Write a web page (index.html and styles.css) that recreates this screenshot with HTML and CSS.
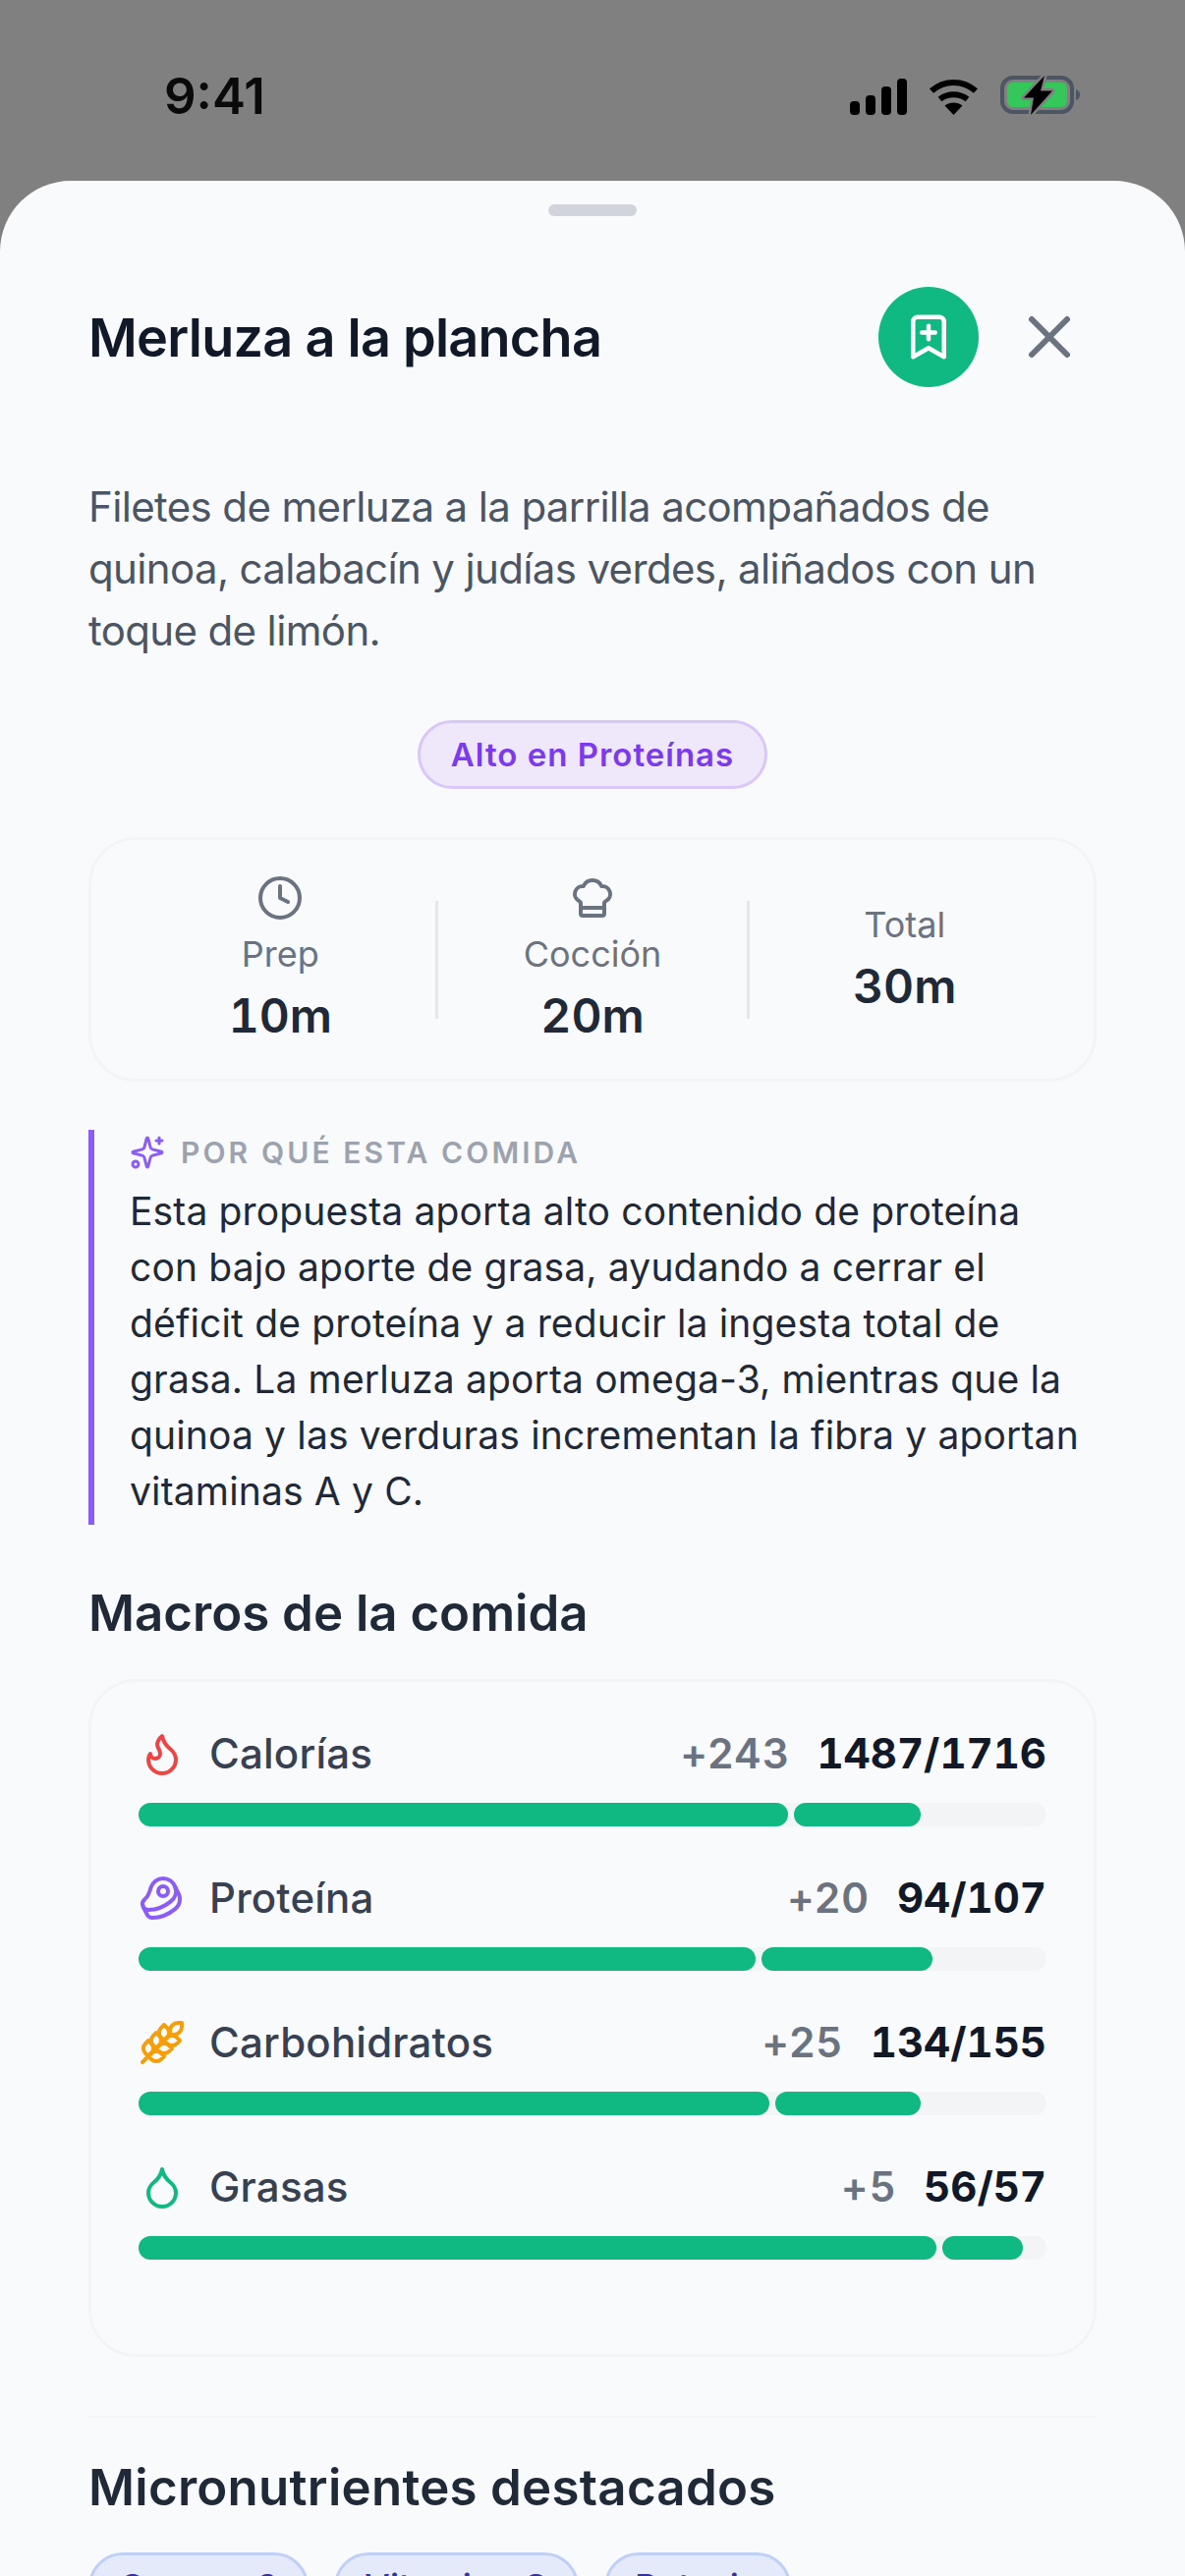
FILE: index.html
```html
<!DOCTYPE html>
<html lang="es">
<head>
    <meta charset="UTF-8">
    <meta name="viewport" content="width=device-width, initial-scale=1.0">
    <title>Merluza a la plancha</title>
    <link rel="stylesheet" href="styles.css">
</head>
<body>
    <div class="status-bar">
        <span class="clock">9:41</span>
        <div class="status-icons">
            <svg class="signal" width="58" height="37" viewBox="0 0 58 37" fill="#000">
                <rect x="0" y="23" width="10" height="14" rx="4"/>
                <rect x="16" y="17" width="10" height="20" rx="4"/>
                <rect x="32" y="8" width="10" height="29" rx="4"/>
                <rect x="48" y="0" width="10" height="37" rx="4"/>
            </svg>
            <svg class="wifi" width="51" height="37" viewBox="0 0 51 37" fill="none" stroke="#000" stroke-width="6">
                <path d="M3 12.5C16 1 35 1 48 12.5"/>
                <path d="M11.5 21C19.500 14.500 31.500 14.500 39.500 21"/>
                <path d="M25.500 37L16.500 27.500C21.500 23.500 29.500 23.500 34.500 27.500Z" fill="#000" stroke="none"/>
            </svg>
            <svg class="battery" width="82" height="42" viewBox="0 0 82 42" fill="none">
                <rect x="2" y="3" width="71" height="35" rx="11" stroke="#4b5563" stroke-width="4"/>
                <rect x="7" y="8" width="61" height="25" rx="6" fill="#34c759"/>
                <path d="M77 15c3 1 4 3 4 5.500s-1 4.500-4 5.500z" fill="#4b5563"/>
                <path d="M45 1L24 23.500H34L31 41L53 16.500H41Z" fill="#000" stroke="#7f807f" stroke-width="5" stroke-linejoin="round" paint-order="stroke"/>
            </svg>
        </div>
    </div>

    <div class="sheet">
        <div class="handle"></div>

        <div class="sheet-header">
            <h1>Merluza a la plancha</h1>
            <div class="save-btn">
                <svg width="54" height="54" viewBox="0 0 24 24" fill="none" stroke="#fff" stroke-width="2" stroke-linecap="round" stroke-linejoin="round">
                    <path d="m19 21-7-4-7 4V5a2 2 0 0 1 2-2h10a2 2 0 0 1 2 2v16z"/>
                    <line x1="12" x2="12" y1="7" y2="13"/>
                    <line x1="15" x2="9" y1="10" y2="10"/>
                </svg>
            </div>
            <svg class="close-icon" width="72" height="72" viewBox="0 0 24 24" fill="none" stroke="#6b7280" stroke-width="2" stroke-linecap="round" stroke-linejoin="round">
                <path d="M18 6 6 18"/>
                <path d="m6 6 12 12"/>
            </svg>
        </div>

        <p class="description">Filetes de merluza a la parrilla acompañados de quinoa, calabacín y judías verdes, aliñados con un toque de limón.</p>

        <div class="tag-row"><span class="tag">Alto en Proteínas</span></div>

        <div class="card time-card">
            <div class="time-col">
                <svg width="48" height="48" viewBox="0 0 24 24" fill="none" stroke="#6b7280" stroke-width="2" stroke-linecap="round" stroke-linejoin="round">
                    <circle cx="12" cy="12" r="10"/>
                    <polyline points="12 6 12 12 16 14"/>
                </svg>
                <span class="time-label">Prep</span>
                <span class="time-value">10m</span>
            </div>
            <div class="time-sep"></div>
            <div class="time-col">
                <svg width="48" height="48" viewBox="0 0 24 24" fill="none" stroke="#6b7280" stroke-width="2" stroke-linecap="round" stroke-linejoin="round">
                    <path d="M17 21a1 1 0 0 0 1-1v-5.350c0-.457.316-.844.727-1.041a4 4 0 0 0-2.134-7.589 5 5 0 0 0-9.186 0 4 4 0 0 0-2.134 7.588c.411.198.727.585.727 1.041V20a1 1 0 0 0 1 1Z"/>
                    <path d="M6 17h12"/>
                </svg>
                <span class="time-label">Cocción</span>
                <span class="time-value">20m</span>
            </div>
            <div class="time-sep"></div>
            <div class="time-col">
                <span class="time-label">Total</span>
                <span class="time-value">30m</span>
            </div>
        </div>

        <div class="why">
            <div class="why-title">
                <svg width="36" height="36" viewBox="0 0 24 24" fill="none" stroke="#8b5cf6" stroke-width="2" stroke-linecap="round" stroke-linejoin="round">
                    <path d="M9.937 15.500A2 2 0 0 0 8.500 14.063l-6.135-1.582a.5.5 0 0 1 0-.962L8.500 9.936A2 2 0 0 0 9.937 8.500l1.582-6.135a.5.5 0 0 1 .963 0L14.063 8.500A2 2 0 0 0 15.500 9.937l6.135 1.581a.5.5 0 0 1 0 .964L15.500 14.063a2 2 0 0 0-1.437 1.437l-1.582 6.135a.5.5 0 0 1-.963 0z"/>
                    <path d="M20 2v4"/>
                    <path d="M22 4h-4"/>
                    <circle cx="4" cy="20" r="2"/>
                </svg>
                <span>POR QUÉ ESTA COMIDA</span>
            </div>
            <p>Esta propuesta aporta alto contenido de proteína<br>con bajo aporte de grasa, ayudando a cerrar el<br>déficit de proteína y a reducir la ingesta total de<br>grasa. La merluza aporta omega-3, mientras que la<br>quinoa y las verduras incrementan la fibra y aportan<br>vitaminas A y C.</p>
        </div>

        <h2 class="macros-title">Macros de la comida</h2>

        <div class="card macros-card">
            <div class="macro">
                <div class="macro-head">
                    <svg width="48" height="48" viewBox="0 0 24 24" fill="none" stroke="#ef4444" stroke-width="2" stroke-linecap="round" stroke-linejoin="round">
                        <path d="M8.500 14.500A2.500 2.500 0 0 0 11 12c0-1.380-.5-2-1-3-1.072-2.143-.224-4.054 2-6 .5 2.500 2 4.900 4 6.500 2 1.600 3 3.500 3 5.500a7 7 0 1 1-14 0c0-1.153.433-2.294 1-3a2.500 2.500 0 0 0 2.500 2.500z"/>
                    </svg>
                    <span class="macro-name">Calorías</span>
                    <span class="macro-delta">+243</span>
                    <span class="macro-total">1487/1716</span>
                </div>
                <div class="bar">
                    <div class="seg" style="width: 71.54%"></div>
                    <div class="seg" style="width: 13.96%"></div>
                </div>
            </div>
            <div class="macro">
                <div class="macro-head">
                    <svg width="48" height="48" viewBox="0 0 24 24" fill="none" stroke="#8b5cf6" stroke-width="2" stroke-linecap="round" stroke-linejoin="round">
                        <circle cx="12.500" cy="8.500" r="2.500"/>
                        <path d="M12.500 2a6.500 6.500 0 0 0-6.220 4.600c-1.100 3.130-.78 3.900-3.180 6.080A3 3 0 0 0 5 18c4 0 8.400-1.800 11.400-4.300A6.500 6.500 0 0 0 12.500 2Z"/>
                        <path d="m18.500 6 2.190 4.500a6.480 6.480 0 0 1 .31 2 6.490 6.490 0 0 1-2.600 5.200C15.400 20.200 11 22 7 22a3 3 0 0 1-2.680-1.660L2.400 16.500"/>
                    </svg>
                    <span class="macro-name">Proteína</span>
                    <span class="macro-delta">+20</span>
                    <span class="macro-total">94/107</span>
                </div>
                <div class="bar">
                    <div class="seg" style="width: 67.97%"></div>
                    <div class="seg" style="width: 18.83%"></div>
                </div>
            </div>
            <div class="macro">
                <div class="macro-head">
                    <svg width="48" height="48" viewBox="0 0 24 24" fill="none" stroke="#f59e0b" stroke-width="2" stroke-linecap="round" stroke-linejoin="round">
                        <path d="M2 22 16 8"/>
                        <path d="M3.470 12.530 5 11l1.530 1.530a3.500 3.500 0 0 1 0 4.940L5 19l-1.530-1.530a3.500 3.500 0 0 1 0-4.940Z"/>
                        <path d="M7.470 8.530 9 7l1.530 1.530a3.500 3.500 0 0 1 0 4.940L9 15l-1.530-1.530a3.500 3.500 0 0 1 0-4.940Z"/>
                        <path d="M11.470 4.530 13 3l1.530 1.530a3.500 3.500 0 0 1 0 4.940L13 11l-1.530-1.530a3.500 3.500 0 0 1 0-4.940Z"/>
                        <path d="M20 2h2v2a4 4 0 0 1-4 4h-2V6a4 4 0 0 1 4-4Z"/>
                        <path d="M11.470 17.470 13 19l-1.530 1.530a3.500 3.500 0 0 1-4.940 0L5 19l1.530-1.530a3.500 3.500 0 0 1 4.940 0Z"/>
                        <path d="M15.470 13.470 17 15l-1.530 1.530a3.500 3.500 0 0 1-4.940 0L9 15l1.530-1.530a3.500 3.500 0 0 1 4.940 0Z"/>
                        <path d="M19.470 9.470 21 11l-1.530 1.530a3.500 3.500 0 0 1-4.940 0L13 11l1.530-1.530a3.500 3.500 0 0 1 4.940 0Z"/>
                    </svg>
                    <span class="macro-name">Carbohidratos</span>
                    <span class="macro-delta">+25</span>
                    <span class="macro-total">134/155</span>
                </div>
                <div class="bar">
                    <div class="seg" style="width: 69.48%"></div>
                    <div class="seg" style="width: 16.02%"></div>
                </div>
            </div>
            <div class="macro">
                <div class="macro-head">
                    <svg width="48" height="48" viewBox="0 0 24 24" fill="none" stroke="#10b981" stroke-width="2" stroke-linecap="round" stroke-linejoin="round">
                        <path d="M12 22a7 7 0 0 0 7-7c0-2-1-3.900-3-5.500s-3.500-4-4-6.500c-.5 2.500-2 4.900-4 6.500C6 11.100 5 13 5 15a7 7 0 0 0 7 7z"/>
                    </svg>
                    <span class="macro-name">Grasas</span>
                    <span class="macro-delta">+5</span>
                    <span class="macro-total">56/57</span>
                </div>
                <div class="bar">
                    <div class="seg" style="width: 87.88%"></div>
                    <div class="seg" style="width: 8.87%"></div>
                </div>
            </div>
        </div>

        <hr class="divider">

        <h2 class="micros-title">Micronutrientes destacados</h2>

        <div class="chips">
            <span class="chip">Omega-3</span>
            <span class="chip">Vitamina C</span>
            <span class="chip">Potasio</span>
        </div>
    </div>
</body>
</html>
```

FILE: styles.css
```css
* {
    box-sizing: border-box;
}

html,
body {
    height: 2622px;
    overflow: hidden;
}

body {
    margin: 0;
    background-color: #7f807f;
    font-family: Inter, "Noto Sans", sans-serif;
}

/* Status bar */
.status-bar {
    height: 184px;
    display: flex;
    justify-content: space-between;
    align-items: flex-start;
    padding: 69px 106px 0 167px;
}

.clock {
    font-size: 51px;
    line-height: 58px;
    font-weight: 600;
    color: #0a0a0a;
}

.status-icons {
    display: flex;
    align-items: center;
    gap: 22px;
    margin-top: 9px;
}

.signal,
.wifi {
    display: block;
}

.battery {
    display: block;
    margin-top: -2px;
}

/* Sheet */
.sheet {
    height: 2438px;
    padding: 24px 90px 0;
    background-color: #f9fafc;
    border-radius: 72px 72px 0 0;
}

.handle {
    width: 90px;
    height: 12px;
    margin: 0 auto;
    border-radius: 6px;
    background-color: #d1d5db;
}

.sheet-header {
    display: flex;
    align-items: center;
    margin-top: 72px;
}

h1 {
    flex: 1;
    margin: 0;
    font-size: 54px;
    font-weight: 600;
    letter-spacing: -0.75px;
    color: #111827;
}

.save-btn {
    width: 102px;
    height: 102px;
    border-radius: 50%;
    background-color: #10b981;
    display: flex;
    justify-content: center;
    align-items: center;
}

.close-icon {
    margin-left: 36px;
    margin-right: 12px;
}

.description {
    margin: 90px 0 0;
    font-size: 42px;
    line-height: 63px;
    letter-spacing: -0.64px;
    color: #4b5563;
}

.tag-row {
    display: flex;
    justify-content: center;
    margin-top: 60px;
}

.tag {
    height: 70px;
    padding: 0 31px;
    display: flex;
    align-items: center;
    font-size: 33px;
    font-weight: 600;
    letter-spacing: 1px;
    color: #7c3aed;
    background-color: #efe8fb;
    border: 3px solid #d8c7f8;
    border-radius: 35px;
}

.card {
    border: 3px solid #f3f4f6;
    border-radius: 48px;
}

/* Prep / cook / total */
.time-card {
    height: 249px;
    margin-top: 49px;
    padding: 0 35px;
    display: flex;
    align-items: center;
}

.time-col {
    flex: 1;
    display: flex;
    flex-direction: column;
    align-items: center;
}

.time-col:last-child {
    padding-bottom: 6px;
}

.time-col svg {
    margin-bottom: 6px;
}

.time-label {
    font-size: 36px;
    line-height: 54px;
    color: #6b7280;
}

.time-value {
    margin-top: 6px;
    font-size: 48px;
    line-height: 60px;
    font-weight: 600;
    font-variant-numeric: tabular-nums;
    color: #1f2937;
}

.time-sep {
    width: 3px;
    height: 120px;
    background-color: #e5e7eb;
}

/* Why this meal */
.why {
    margin-top: 49px;
    padding: 2px 0 6px 36px;
    border-left: 6px solid #8b5cf6;
}

.why-title {
    display: flex;
    align-items: center;
    gap: 16px;
    height: 42px;
    font-size: 30px;
    font-weight: 600;
    letter-spacing: 3.100px;
    color: #9ca3af;
}

.why p {
    margin: 10px 0 0;
    font-size: 39px;
    line-height: 57px;
    letter-spacing: 0.15px;
    color: #1f2937;
}

/* Macros */
h2 {
    margin: 0;
    font-size: 51px;
    font-weight: 600;
    color: #1f2937;
}

.macros-title {
    margin-top: 57px;
    line-height: 66px;
}

.macros-card {
    margin-top: 34px;
    height: 690px;
    padding: 42px 48px 0;
}

.macro {
    margin-bottom: 42px;
}

.macro-head {
    display: flex;
    align-items: center;
    height: 61px;
}

.macro-name {
    flex: 1;
    margin-left: 24px;
    font-size: 42px;
    font-weight: 500;
    letter-spacing: 0.2px;
    color: #374151;
}

.macro-delta {
    font-size: 42px;
    font-weight: 600;
    letter-spacing: 1px;
    color: #6b7280;
}

.macro-total {
    margin-left: 28px;
    font-size: 42px;
    font-weight: 700;
    font-variant-numeric: tabular-nums;
    color: #111827;
}

.bar {
    height: 24px;
    margin-top: 20px;
    display: flex;
    gap: 6px;
    border-radius: 12px;
    background-color: #f3f4f6;
}

.seg {
    height: 24px;
    border-radius: 12px;
    background-color: #10b981;
}

.divider {
    margin: 60px 0 0;
    height: 2px;
    border: 0;
    background-color: #f4f5f7;
}

.micros-title {
    margin-top: 38px;
    line-height: 66px;
    letter-spacing: 0.27px;
}

.chips {
    display: flex;
    gap: 26px;
    margin-top: 33px;
}

.chip {
    height: 70px;
    padding: 0 28px;
    display: flex;
    align-items: center;
    font-size: 36px;
    font-weight: 500;
    color: #3730a3;
    background-color: #e5eafa;
    border: 3px solid #bfcff8;
    border-radius: 35px;
}
```
